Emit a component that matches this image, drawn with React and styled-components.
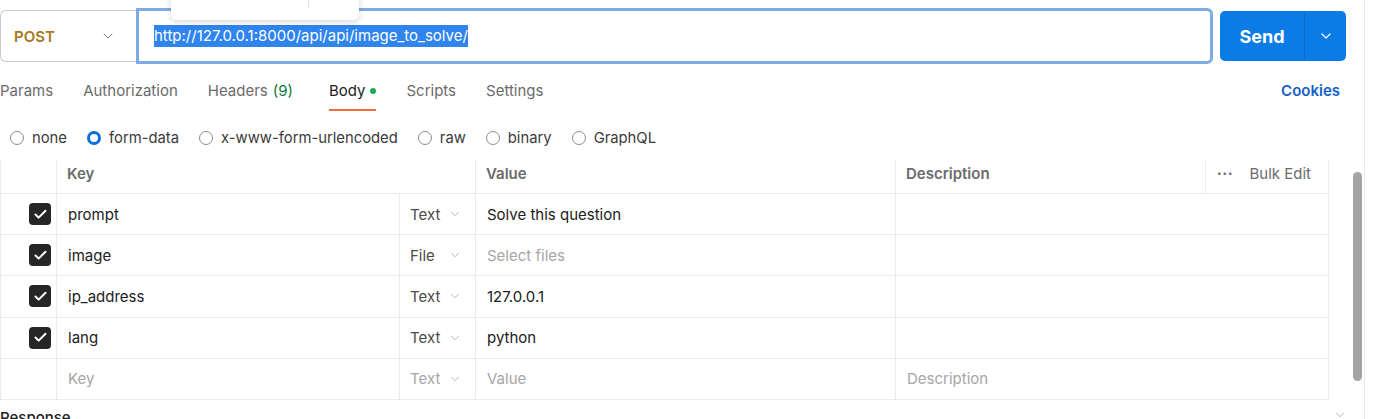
import React from 'react';
import styled, { createGlobalStyle } from 'styled-components';
import { ChevronDown, Check } from 'lucide-react';

const GlobalStyle = createGlobalStyle`
  html, body { margin: 0; padding: 0; background: #fff; }
  body { font-family: Inter, "Noto Sans", sans-serif; color: #212121; }
`;

const tabs = [
  { label: 'Params' },
  { label: 'Authorization' },
  { label: 'Headers', count: '(9)' },
  { label: 'Body', active: true },
  { label: 'Scripts' },
  { label: 'Settings' },
];

const bodyTypes = ['none', 'form-data', 'x-www-form-urlencoded', 'raw', 'binary', 'GraphQL'];

const rows = [
  { key: 'prompt', type: 'Text', value: 'Solve this question' },
  { key: 'image', type: 'File', value: 'Select files', placeholder: true },
  { key: 'ip_address', type: 'Text', value: '127.0.0.1' },
  { key: 'lang', type: 'Text', value: 'python' },
];

export default function App() {
  return (
    <>
      <GlobalStyle />
      <Page>
        <Popup><PopupDivider /></Popup>
        <TopBar>
          <MethodBox>
            <Method>POST</Method>
            <ChevronDown size={16} strokeWidth={1.4} color="#6b6b6b" />
          </MethodBox>
          <UrlBox>
            <Selected>http://127.0.0.1:8000/api/api/image_to_solve/</Selected>
          </UrlBox>
          <SendGroup>
            <SendMain>Send</SendMain>
            <SendArrow><ChevronDown size={16} strokeWidth={1.8} color="#fff" /></SendArrow>
          </SendGroup>
        </TopBar>

        <TabBar>
          <Tabs>
            {tabs.map((t) => (
              <Tab key={t.label} active={t.active}>
                {t.label}
                {t.count && <Count>{t.count}</Count>}
                {t.active && <Dot />}
              </Tab>
            ))}
          </Tabs>
          <Cookies>Cookies</Cookies>
        </TabBar>

        <RadioRow>
          {bodyTypes.map((b) => (
            <RadioItem key={b}>
              <Radio checked={b === 'form-data'} />
              {b}
            </RadioItem>
          ))}
        </RadioRow>

        <Table>
          <HeadRow>
            <Cell />
            <HeadCell span={2}>Key</HeadCell>
            <HeadCell>Value</HeadCell>
            <HeadCell>Description</HeadCell>
            <BulkCell>
              <Dots>•••</Dots>
              Bulk Edit
            </BulkCell>
          </HeadRow>
          {rows.map((r) => (
            <Row key={r.key}>
              <CheckCell>
                <Box><Check size={15} strokeWidth={3.2} color="#fff" /></Box>
              </CheckCell>
              <TextCell>{r.key}</TextCell>
              <TypeCell>
                {r.type}
                <ChevronDown size={14} strokeWidth={1.3} color="#a0a0a0" />
              </TypeCell>
              <TextCell muted={r.placeholder}>{r.value}</TextCell>
              <TextCell span={2} last />
            </Row>
          ))}
          <Row>
            <CheckCell />
            <TextCell muted>Key</TextCell>
            <TypeCell muted>
              Text
              <ChevronDown size={14} strokeWidth={1.3} color="#a0a0a0" />
            </TypeCell>
            <TextCell muted>Value</TextCell>
            <TextCell span={2} muted last>Description</TextCell>
          </Row>
        </Table>
        <ScrollThumb />

        <ResponseBar>
          <ResponseTitle>Response</ResponseTitle>
          <ChevronDown size={14} strokeWidth={1.3} color="#a0a0a0" />
        </ResponseBar>
      </Page>
    </>
  );
}

const Page = styled.div`
  position: relative;
  width: 1364px;
  height: 419px;
  overflow: hidden;
  border-right: 1px solid #e8e8e8;
`;

const Popup = styled.div`
  position: absolute;
  left: 171px;
  top: -12px;
  width: 188px;
  height: 32px;
  background: #fff;
  border-radius: 6px;
  box-shadow: 0 2px 6px rgba(0, 0, 0, 0.16);
  z-index: 2;
`;

const PopupDivider = styled.div`
  position: absolute;
  left: 137px;
  top: 0;
  width: 1px;
  height: 20px;
  background: #e3e3e3;
`;

const TopBar = styled.div`
  display: flex;
  align-items: center;
  height: 72px;
`;

const MethodBox = styled.div`
  box-sizing: border-box;
  width: 136px;
  height: 52px;
  display: flex;
  align-items: center;
  justify-content: space-between;
  padding: 0 20px 0 13px;
  border: 1px solid #c8c8c8;
  border-right: none;
  border-radius: 6px 0 0 6px;
`;

const Method = styled.span`
  font-size: 15px;
  font-weight: 600;
  color: #a8791c;
`;

const UrlBox = styled.div`
  box-sizing: border-box;
  width: 1077px;
  height: 56px;
  display: flex;
  align-items: center;
  padding-left: 15px;
  border: 3px solid #7eabe6;
  border-radius: 0 6px 6px 0;
`;

const Selected = styled.span`
  font-size: 15px;
  line-height: 22px;
  color: #fff;
  background: #2f84ee;
`;

const SendGroup = styled.div`
  display: flex;
  height: 50px;
  margin-left: 7px;
  border-radius: 5px;
  overflow: hidden;
  background: #0b7be6;
`;

const SendMain = styled.div`
  width: 84px;
  display: flex;
  align-items: center;
  justify-content: center;
  color: #fff;
  font-size: 18px;
  font-weight: 700;
  border-right: 1px solid #0a6acb;
`;

const SendArrow = styled.div`
  width: 41px;
  display: flex;
  align-items: center;
  justify-content: center;
`;

const TabBar = styled.div`
  display: flex;
  justify-content: space-between;
  height: 40px;
  padding-right: 24px;
`;

const Tabs = styled.div`
  display: flex;
  gap: 30px;
`;

const Tab = styled.div`
  position: relative;
  display: flex;
  align-items: center;
  height: 37px;
  font-size: 15px;
  color: ${(p) => (p.active ? '#212121' : '#6b6b6b')};
  border-bottom: 2px solid ${(p) => (p.active ? '#f26b3a' : 'transparent')};
`;

const Count = styled.span`
  margin: 0 6px 0 5px;
  color: #0b7a3e;
`;

const Dot = styled.span`
  width: 6px;
  height: 6px;
  margin-left: 5px;
  border-radius: 50%;
  background: #12b051;
`;

const Cookies = styled.div`
  display: flex;
  align-items: center;
  height: 37px;
  font-size: 15px;
  font-weight: 600;
  color: #1361c6;
`;

const RadioRow = styled.div`
  box-sizing: border-box;
  display: flex;
  align-items: center;
  gap: 20px;
  height: 47px;
  padding: 4px 0 0 10px;
`;

const RadioItem = styled.label`
  display: flex;
  align-items: center;
  gap: 8px;
  font-size: 14.8px;
  color: #3a3a3a;
`;

const Radio = styled.span`
  box-sizing: border-box;
  width: 14px;
  height: 14px;
  border-radius: 50%;
  border: ${(p) => (p.checked ? '3px solid #0c6fd8' : '1px solid #8c8c8c')};
`;

const Table = styled.div`
  width: 1329px;
  box-sizing: border-box;
  border-left: 1px solid #ebebeb;
  border-right: 1px solid #ebebeb;
`;

const cols = '56px 343px 76px 420px 310px 122px';

const Row = styled.div`
  display: grid;
  grid-template-columns: ${cols};
  height: 40.2px;
  border-bottom: 1px solid #ebebeb;
`;

const HeadRow = styled(Row)`
  height: 34px;
`;

const Cell = styled.div`
  display: flex;
  align-items: center;
  border-right: 1px solid #ebebeb;
  grid-column: span ${(p) => p.span || 1};
`;

const HeadCell = styled(Cell)`
  padding: 0 0 6px 10px;
  font-size: 15px;
  font-weight: 600;
  color: #6b6b6b;
`;

const BulkCell = styled(Cell)`
  border-right: none;
  padding: 0 0 6px 11px;
  font-size: 15px;
  color: #6b6b6b;
`;

const Dots = styled.span`
  font-size: 8px;
  letter-spacing: 1px;
  margin-right: 16px;
`;

const CheckCell = styled(Cell)`
  justify-content: flex-end;
  padding-right: 5px;
`;

const Box = styled.span`
  width: 22px;
  height: 22px;
  border-radius: 4px;
  background: #262626;
  display: flex;
  align-items: center;
  justify-content: center;
`;

const TextCell = styled(Cell)`
  padding-left: 11px;
  font-size: 15px;
  color: ${(p) => (p.muted ? '#a6a6a6' : '#212121')};
  border-right: ${(p) => (p.last ? 'none' : '1px solid #ebebeb')};
`;

const TypeCell = styled(Cell)`
  justify-content: space-between;
  padding: 0 13px 0 10px;
  font-size: 15px;
  color: ${(p) => (p.muted ? '#a6a6a6' : '#4a4a4a')};
`;

const ScrollThumb = styled.div`
  position: absolute;
  left: 1353px;
  top: 172px;
  width: 9px;
  height: 209px;
  border-radius: 5px;
  background: #a3a3a3;
`;

const ResponseBar = styled.div`
  display: flex;
  justify-content: space-between;
  align-items: flex-start;
  padding: 8px 17px 0 0;
`;

const ResponseTitle = styled.div`
  font-size: 15px;
  font-weight: 500;
  color: #212121;
`;
